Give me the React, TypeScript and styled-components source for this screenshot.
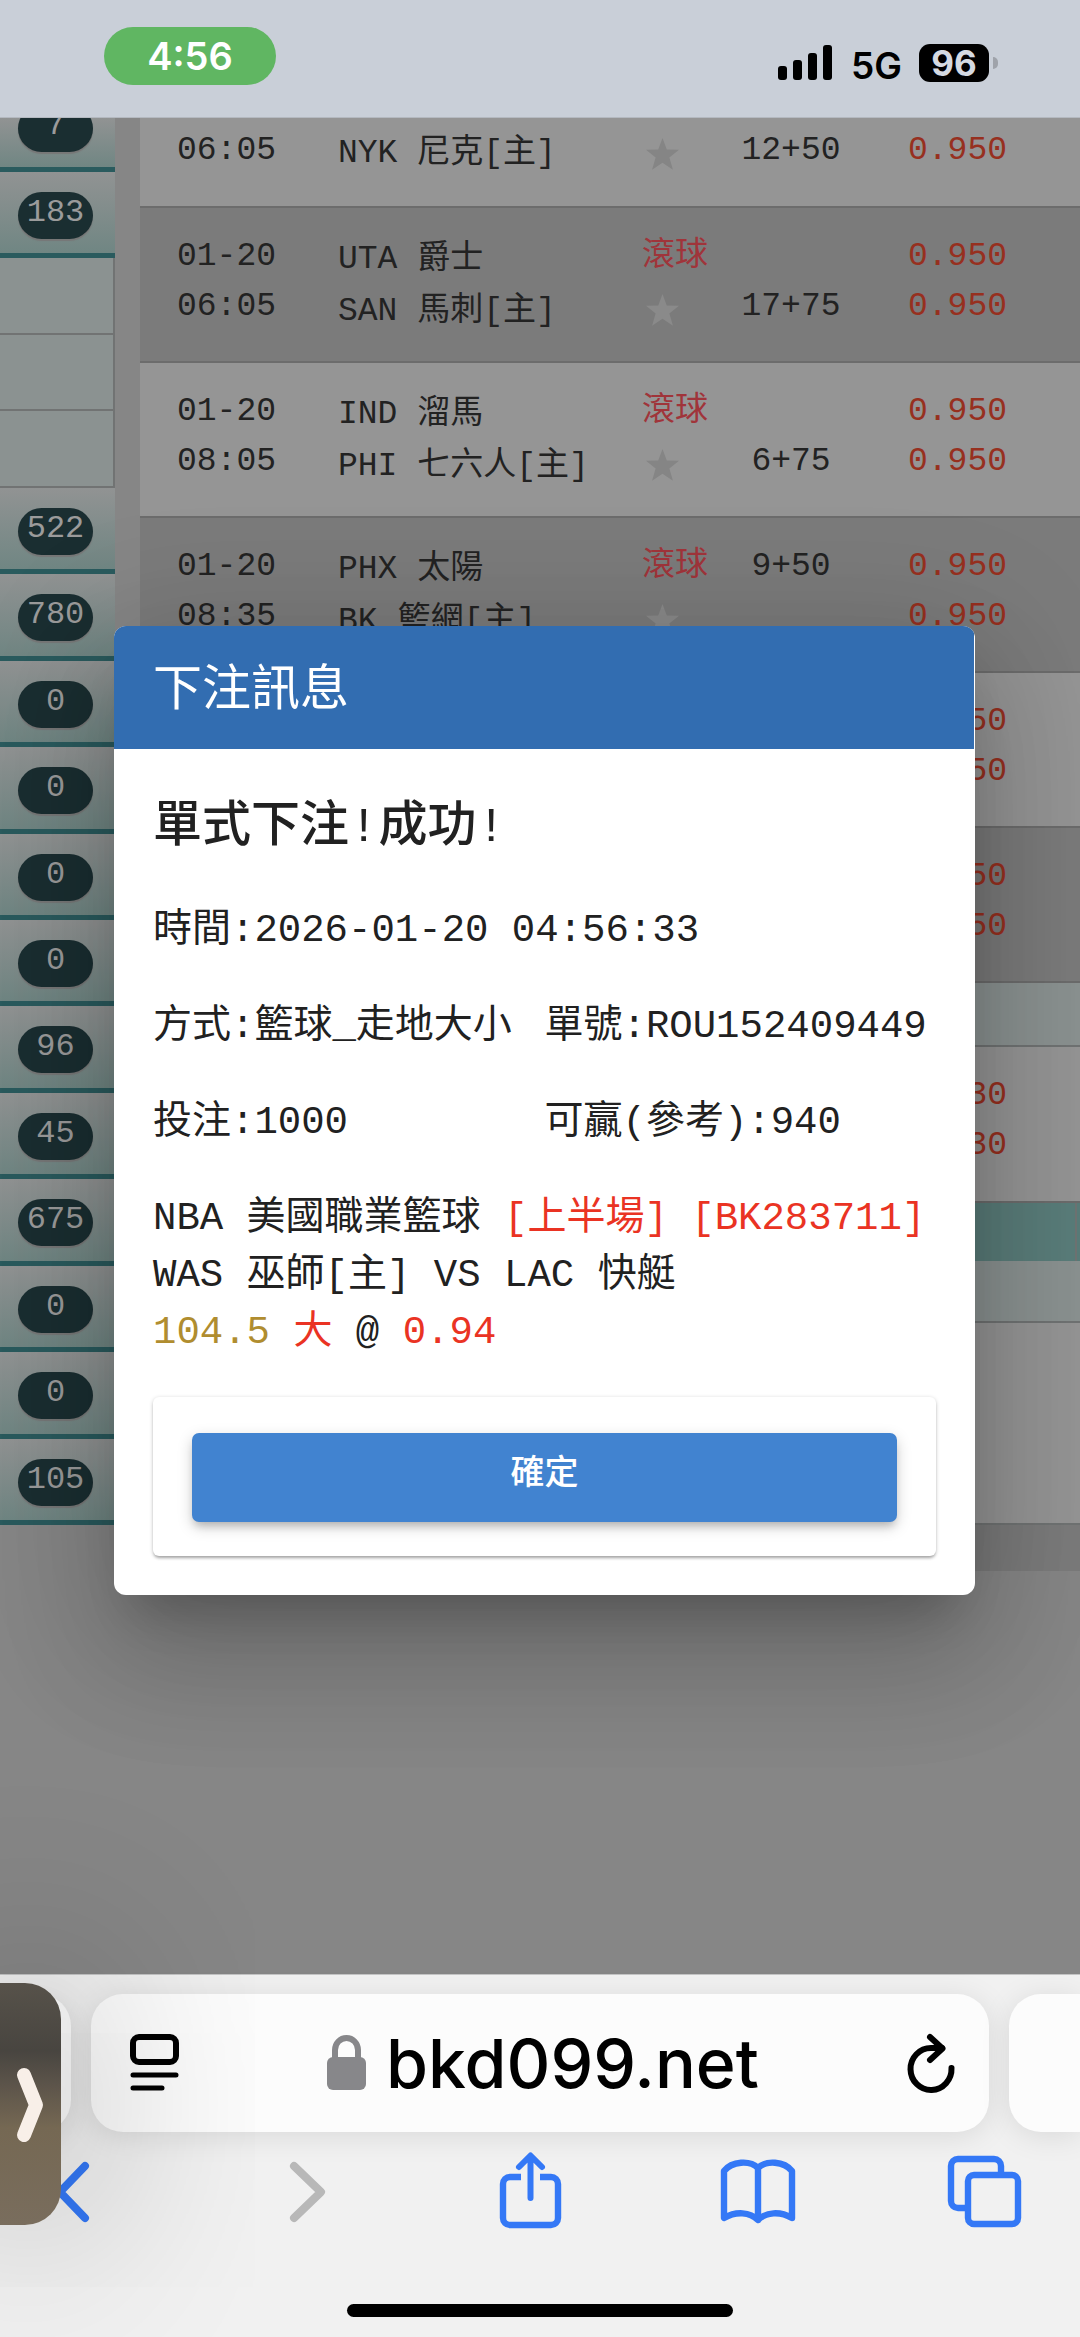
import React from "react";
import styled, { createGlobalStyle, css } from "styled-components";

const mono = `"Liberation Mono", "Noto Sans CJK TC", monospace`;
const system = `Inter, "Liberation Sans", sans-serif`;

const GlobalStyle = createGlobalStyle`
  *, *::before, *::after { box-sizing: border-box; }
  body { margin: 0; background: #868686; font-family: ${mono}; color: #212121; }
  button { border: 0; padding: 0; background: none; font: inherit; color: inherit; cursor: pointer; }
  p, h1, h2 { margin: 0; }
`;

const Screen = styled.div`
  display: flex;
  flex-direction: column;
  min-height: 100vh;
  position: relative;
  overflow: hidden;
`;

/* ---------- status bar ---------- */

const StatusBar = styled.header`
  display: flex;
  align-items: flex-start;
  justify-content: space-between;
  height: 118px;
  padding: 27px 82px 0 104px;
  background: #c9cfd8;
  border-bottom: 1px solid #b4b9c0;
  font-family: ${system};
`;

const Clock = styled.time`
  width: 172px;
  height: 58px;
  line-height: 58px;
  border-radius: 29px;
  background: #60b662;
  color: #fff;
  font-size: 38px;
  font-weight: 600;
  text-align: center;
`;

const Indicators = styled.div`
  display: flex;
  align-items: center;
  height: 72px;
  color: #000;
`;

const Network = styled.span`
  margin: 4px 17px 0 18px;
  font-size: 37px;
  font-weight: 600;
`;

const Battery = styled.span`
  width: 70px;
  height: 38px;
  line-height: 38px;
  border-radius: 11px;
  background: #000;
  color: #d5dae2;
  font-size: 35px;
  font-weight: 700;
  text-align: center;
`;

const BatteryTip = styled.span`
  width: 5px;
  height: 12px;
  margin-left: 4px;
  border-radius: 0 6px 6px 0;
  background: #9fa3aa;
`;

/* ---------- page behind the dialog ---------- */

const Page = styled.div`
  position: relative;
  flex: 1;
  display: flex;
  align-items: flex-start;
  background: #868686;
  overflow: hidden;
`;

const Sidebar = styled.nav`
  flex: none;
  width: 115px;
  margin-right: 25px;
`;

const SportList = styled.div<{ $height: number }>`
  display: grid;
  grid-auto-rows: 1fr;
  height: ${(p) => p.$height}px;
`;

const SportRow = styled.button<{ $cut?: boolean }>`
  display: flex;
  align-items: flex-start;
  width: 100%;
  padding: 20px 0 0 18px;
  border-bottom: 5px solid #2a5b5e;
  background: linear-gradient(#919393, #708683);
  ${(p) =>
    p.$cut &&
    css`
      height: 54px;
      padding-top: 0;
      align-items: flex-end;
      padding-bottom: 15px;
      overflow: hidden;
    `}
`;

const Count = styled.span`
  flex: none;
  width: 75px;
  height: 47px;
  line-height: 41px;
  border-radius: 24px;
  background: #1a2e31;
  box-shadow: 0 2px 1px #777;
  color: #9b9b9b;
  font-size: 32px;
  text-align: center;
`;

const SubCell = styled.div`
  border-bottom: 2px solid #717373;
  border-right: 2px solid #717373;
  background: #8b9291;
`;

const Board = styled.main`
  flex: 1;
  min-width: 0;
`;

const Matches = styled.table`
  width: 100%;
  table-layout: fixed;
  border-collapse: collapse;
  font-size: 33px;
  line-height: 50px;
`;

const MatchRow = styled.tr<{ $dark?: boolean; $cut?: boolean }>`
  height: ${(p) => (p.$cut ? 89 : 155)}px;
  background: ${(p) => (p.$dark ? "#7b7b7b" : "#959595")};
  border-bottom: 2px solid #6c6c6c;
  color: ${(p) => (p.$dark ? "#8a8a8a" : "#858585")};
  & > td {
    padding-top: ${(p) => (p.$cut ? 8 : 24)}px;
  }
`;

const Cell = styled.td<{ $kind: "date" | "team" | "play" | "line" | "odds" }>`
  padding: 0;
  vertical-align: top;
  white-space: pre;
  ${(p) =>
    ({
      date: "padding-left: 37px; color: #222;",
      team: "padding-left: 17px; color: #222;",
      play: "padding-left: 1px;",
      line: "text-align: center; color: #222;",
      odds: "text-align: center; color: #97301f;",
    })[p.$kind]}
`;

const Line = styled.div`
  height: 50px;
`;

const TeamLine = styled.div`
  height: 52px;
  line-height: 56px;
`;

const Live = styled(Line)`
  color: #a0343a;
`;

const StarLine = styled.div`
  display: flex;
  align-items: flex-end;
  height: 45px;
  padding-left: 4px;
`;

const Strip = styled.div<{ $h: number; $bg: string }>`
  height: ${(p) => p.$h}px;
  background: ${(p) => p.$bg};
  border-bottom: 2px solid #707373;
`;

const TealStrip = styled.div`
  height: 58px;
  border-right: 2px solid #6f7473;
  background: #5a7d7a;
`;

const TealRow = styled.div`
  padding-right: 3px;
  background: #5a7d7a;
`;

const Tail = styled.div`
  height: 46px;
  background: #7b7b7b;
`;

/* ---------- dialog ---------- */

const Overlay = styled.div`
  position: absolute;
  inset: 0;
  display: flex;
  align-items: flex-start;
  padding: 508px 105px 0 114px;
`;

const Dialog = styled.section`
  flex: 1;
  min-width: 0;
  border-radius: 12px;
  background: #fff;
  overflow: hidden;
  box-shadow:
    0 33px 45px -21px rgba(0, 0, 0, 0.2),
    0 60px 114px 9px rgba(0, 0, 0, 0.14),
    0 27px 138px 24px rgba(0, 0, 0, 0.12);
`;

const DialogTitle = styled.h1`
  margin-right: 1px;
  padding: 30px 39px 21px;
  background: #326db1;
  color: #fff;
  font-size: 49px;
  line-height: 72px;
  font-weight: 400;
`;

const DialogBody = styled.div`
  display: flex;
  flex-direction: column;
  gap: 39px;
  padding: 43px 39px 39px;
  font-size: 39px;
  line-height: 57px;
  white-space: nowrap;
`;

const Result = styled.h2`
  font-size: 49px;
  line-height: 72px;
  font-weight: 500;
`;

const Pair = styled.div`
  display: grid;
  grid-template-columns: 1fr 1fr;
`;

const Tint = styled.span<{ $c: string }>`
  color: ${(p) => p.$c};
`;

const Actions = styled.div`
  margin-top: -4px;
  padding: 36px 39px 34px;
  border-radius: 6px;
  background: #fff;
  box-shadow:
    0 3px 3px -1px rgba(0, 0, 0, 0.25),
    0 1px 4px rgba(0, 0, 0, 0.2);
`;

const Confirm = styled.button`
  display: block;
  width: 100%;
  height: 89px;
  padding-bottom: 6px;
  border-radius: 7px;
  background: #4183d0;
  box-shadow:
    0 6px 8px -3px rgba(0, 0, 0, 0.2),
    0 5px 15px rgba(0, 0, 0, 0.18);
  color: #fff;
  font-size: 34px;
  line-height: 60px;
  font-weight: 500;
`;

/* ---------- browser chrome ---------- */

const Chrome = styled.footer`
  position: relative;
  height: 363px;
  padding-top: 19px;
  border-top: 1px solid #c4c4c4;
  background: #f1f1f1;
  font-family: ${system};
`;

const Tabs = styled.div`
  display: flex;
  gap: 20px;
`;

const card = css`
  height: 138px;
  background: #fcfcfc;
  box-shadow: 0 4px 30px rgba(0, 0, 0, 0.1);
`;

const SideTab = styled.div<{ $side: "left" | "right" }>`
  ${card}
  flex: none;
  width: 71px;
  border-radius: ${(p) => (p.$side === "left" ? "0 32px 32px 0" : "32px 0 0 32px")};
`;

const AddressBar = styled.div`
  ${card}
  flex: 1;
  display: flex;
  align-items: center;
  justify-content: space-between;
  padding: 0 32px 0 38px;
  border-radius: 32px;
`;

const IconButton = styled.button`
  display: flex;
`;

const Address = styled.button`
  display: flex;
  align-items: center;
  gap: 19px;
  color: #000;
  font-size: 68px;
  line-height: 80px;
  font-weight: 500;
`;

const Toolbar = styled.nav`
  display: flex;
  justify-content: space-between;
  padding: 16px 58px 0 34px;
`;

const HomeIndicator = styled.div`
  width: 386px;
  height: 13px;
  margin: 74px auto 0;
  border-radius: 7px;
  background: #000;
`;

const Handle = styled.button`
  position: absolute;
  left: 0;
  bottom: 112px;
  display: flex;
  align-items: center;
  width: 61px;
  height: 242px;
  border-radius: 0 36px 36px 0;
  background: linear-gradient(#57524a, #484540 28%, #5c544a 42%, #756853 60%, #796d5d);
  box-shadow: 0 0 200px 20px rgba(0, 0, 0, 0.3);
`;

/* ---------- drawings ---------- */

const Star = () => (
  <svg width="33" height="33" viewBox="0 0 24 24" fill="currentColor">
    <path d="M12 0l3.1 8.3 8.9.3-7 5.500 2.600 9L12 18l-7.600 5.100 2.600-9L0 8.600l8.900-.3z" />
  </svg>
);

const Signal = () => (
  <svg width="55" height="36" viewBox="0 0 55 36">
    <rect x="0" y="21" width="9" height="14" rx="3" />
    <rect x="15" y="15" width="9" height="20" rx="3" />
    <rect x="30" y="8" width="9" height="27" rx="3" />
    <rect x="45" y="0" width="9" height="35" rx="3" />
  </svg>
);

const ReaderIcon = () => (
  <svg width="50" height="58" viewBox="0 0 50 58" fill="none" stroke="#000" strokeWidth="6" strokeLinecap="round">
    <rect x="4" y="3" width="43" height="25" rx="6" />
    <path d="M4 41h43M4 54h29" strokeWidth="5" />
  </svg>
);

const LockIcon = () => (
  <svg width="40" height="56" viewBox="0 0 40 56">
    <path d="M8 26V15a11.500 12 0 0 1 23 0v11" fill="none" stroke="#87878a" strokeWidth="6" />
    <rect x="0" y="22" width="39" height="33" rx="6" fill="#87878a" />
  </svg>
);

const ReloadIcon = () => (
  <svg width="50" height="62" viewBox="0 0 50 62" fill="none" stroke="#000" strokeWidth="6" strokeLinecap="round" strokeLinejoin="round">
    <path d="M44.500 36A20.500 21 0 1 1 24 16h11" />
    <path d="M23 5l12.500 11.500L23 28" />
  </svg>
);

const tool = {
  width: 76,
  height: 82,
  viewBox: "0 0 76 82",
  overflow: "visible" as const,
  fill: "none",
  stroke: "#3478f6",
  strokeWidth: 6.4,
  strokeLinecap: "round" as const,
  strokeLinejoin: "round" as const,
};

const BackIcon = () => (
  <svg {...tool} strokeWidth={8}>
    <path d="M51 18L26 44l25 26" />
  </svg>
);

const ForwardIcon = () => (
  <svg {...tool} strokeWidth={8} stroke="#b8b8b8">
    <path d="M32 18l27 26-27 26" />
  </svg>
);

const ShareIcon = () => (
  <svg {...tool}>
    <path d="M31 29H20a7 7 0 0 0-7 7v34a7 7 0 0 0 7 7h41a7 7 0 0 0 7-7V36a7 7 0 0 0-7-7H50" strokeLinecap="butt" />
    <path d="M40.500 50V8M29 19L40.500 7.500 52 19" strokeWidth="6" />
  </svg>
);

const BookIcon = () => (
  <svg {...tool}>
    <path d="M40 20v52c-8-8-22-9-34-2V23c8-10 26-11 34-3zM40 20c8-8 26-7 34 3v47c-12-7-26-6-34 2" />
  </svg>
);

const TabsIcon = () => (
  <svg {...tool}>
    <path d="M20 60h-8a7 7 0 0 1-7-7V18a7 7 0 0 1 7-7h36a7 7 0 0 1 7 7v7" strokeLinecap="butt" />
    <rect x="22" y="27" width="50" height="49" rx="6" />
  </svg>
);

/* ---------- data ---------- */

type Match = {
  dark?: boolean;
  cut?: boolean;
  date: string[];
  team: string[];
  live?: boolean;
  line: string[];
  odds: string[];
};

const matches: Match[] = [
  { cut: true, date: ["06:05"], team: ["NYK 尼克[主]"], line: ["12+50"], odds: ["0.950"] },
  { dark: true, date: ["01-20", "06:05"], team: ["UTA 爵士", "SAN 馬刺[主]"], live: true, line: ["", "17+75"], odds: ["0.950", "0.950"] },
  { date: ["01-20", "08:05"], team: ["IND 溜馬", "PHI 七六人[主]"], live: true, line: ["", "6+75"], odds: ["0.950", "0.950"] },
  { dark: true, date: ["01-20", "08:35"], team: ["PHX 太陽", "BK 籃網[主]"], live: true, line: ["9+50", ""], odds: ["0.950", "0.950"] },
  { date: [], team: [], line: [], odds: ["0.950", "0.950"] },
  { dark: true, date: [], team: [], line: [], odds: ["0.950", "0.950"] },
];

const lateMatches: Match[] = [{ date: [], team: [], line: [], odds: ["0.930", "0.930"] }];

const counts = [522, 780, 0, 0, 0, 0, 96, 45, 675, 0, 0, 105];

const lines = (values: string[]) => values.map((v, i) => <Line key={i}>{v}</Line>);

const MatchTable = ({ rows }: { rows: Match[] }) => (
  <Matches>
    <colgroup>
      <col style={{ width: 181 }} />
      <col style={{ width: 320 }} />
      <col style={{ width: 79 }} />
      <col style={{ width: 142 }} />
      <col style={{ width: 191 }} />
      <col />
    </colgroup>
    <tbody>
      {rows.map((m, i) => (
        <MatchRow key={i} $dark={m.dark} $cut={m.cut}>
          <Cell $kind="date">{lines(m.date)}</Cell>
          <Cell $kind="team">
            {m.team.map((name) => (
              <TeamLine key={name}>{name}</TeamLine>
            ))}
          </Cell>
          <Cell $kind="play">
            {m.live && <Live>滾球</Live>}
            {m.team.length > 0 && (
              <StarLine>
                <Star />
              </StarLine>
            )}
          </Cell>
          <Cell $kind="line">{lines(m.line)}</Cell>
          <Cell $kind="odds">{lines(m.odds)}</Cell>
          <td />
        </MatchRow>
      ))}
    </tbody>
  </Matches>
);

export default function App() {
  return (
    <Screen>
      <GlobalStyle />
      <StatusBar>
        <Clock>4:56</Clock>
        <Indicators>
          <Signal />
          <Network>5G</Network>
          <Battery>96</Battery>
          <BatteryTip />
        </Indicators>
      </StatusBar>

      <Page>
        <Sidebar>
          <SportRow $cut>
            <Count>7</Count>
          </SportRow>
          <SportList $height={86}>
            <SportRow>
              <Count>183</Count>
            </SportRow>
          </SportList>
          <SportList $height={230}>
            <SubCell />
            <SubCell />
            <SubCell />
          </SportList>
          <SportList $height={1037}>
            {counts.map((n, i) => (
              <SportRow key={i}>
                <Count>{n}</Count>
              </SportRow>
            ))}
          </SportList>
        </Sidebar>

        <Board>
          <MatchTable rows={matches} />
          <Strip $h={64} $bg="#8b9291" />
          <MatchTable rows={lateMatches} />
          <TealRow>
            <TealStrip />
          </TealRow>
          <Strip $h={62} $bg="#8b9291" />
          <Strip $h={202} $bg="#959595" />
          <Tail />
        </Board>

        <Overlay>
          <Dialog role="dialog" aria-labelledby="bet-title">
            <DialogTitle id="bet-title">下注訊息</DialogTitle>
            <DialogBody>
              <Result>單式下注!成功!</Result>
              <p>時間:2026-01-20 04:56:33</p>
              <Pair>
                <span>方式:籃球_走地大小</span>
                <span>單號:ROU152409449</span>
              </Pair>
              <Pair>
                <span>投注:1000</span>
                <span>可贏(參考):940</span>
              </Pair>
              <div>
                <p>
                  NBA 美國職業籃球 <Tint $c="#ea3323">[上半場] [BK283711]</Tint>
                </p>
                <p>WAS 巫師[主] VS LAC 快艇</p>
                <p>
                  <Tint $c="#b08d2f">104.5</Tint> <Tint $c="#ea3323">大</Tint> @ <Tint $c="#ea3323">0.94</Tint>
                </p>
              </div>
              <Actions>
                <Confirm type="button">確定</Confirm>
              </Actions>
            </DialogBody>
          </Dialog>
        </Overlay>
      </Page>

      <Chrome>
        <Tabs>
          <SideTab $side="left" />
          <AddressBar>
            <IconButton aria-label="Reader">
              <ReaderIcon />
            </IconButton>
            <Address>
              <LockIcon />
              bkd099.net
            </Address>
            <IconButton aria-label="Reload">
              <ReloadIcon />
            </IconButton>
          </AddressBar>
          <SideTab $side="right" />
        </Tabs>
        <Toolbar>
          <IconButton aria-label="Back">
            <BackIcon />
          </IconButton>
          <IconButton aria-label="Forward">
            <ForwardIcon />
          </IconButton>
          <IconButton aria-label="Share">
            <ShareIcon />
          </IconButton>
          <IconButton aria-label="Bookmarks">
            <BookIcon />
          </IconButton>
          <IconButton aria-label="Tabs">
            <TabsIcon />
          </IconButton>
        </Toolbar>
        <HomeIndicator />
        <Handle aria-label="Show video">
          <svg width="61" height="90" viewBox="0 0 61 90" fill="none" stroke="#f8efe8" strokeWidth="14" strokeLinecap="round" strokeLinejoin="round">
            <path d="M24 16l12 30-12 30" />
          </svg>
        </Handle>
      </Chrome>
    </Screen>
  );
}
